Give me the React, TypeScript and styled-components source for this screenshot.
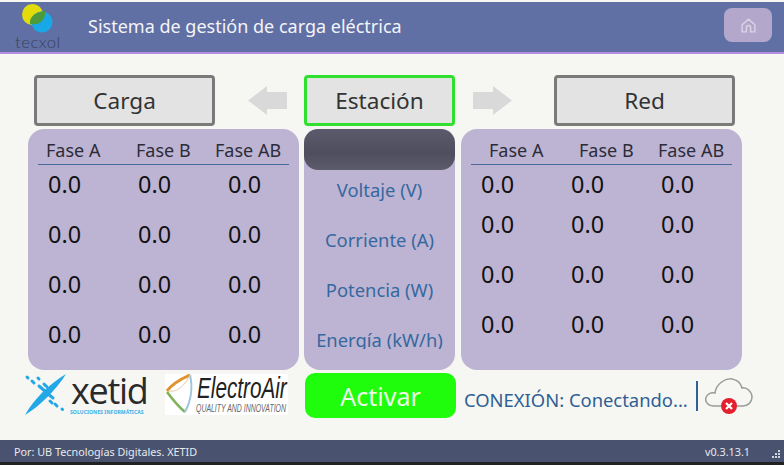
import React from "react";
import styled, { createGlobalStyle } from "styled-components";

const Global = createGlobalStyle`
  html, body { margin: 0; padding: 0; background: #fff; }
  #root { width: 784px; height: 465px; overflow: hidden; }
  * { box-sizing: border-box; }
`;
const FONT = `"Noto Sans", "Open Sans", "Liberation Sans", sans-serif`;

const Screen = styled.div`
  width: 784px; height: 465px; padding-top: 2px; display: flex; flex-direction: column;
  background: #f6f6f3; font-family: ${FONT}; overflow: hidden;
`;
const Header = styled.header`
  height: 52px; flex: none; display: flex; align-items: center; background: #6070a4;
  border-bottom: 2px solid #b48fe0; padding-right: 12px;
`;
const LogoBox = styled.div`
  width: 88px; height: 50px; flex: none; position: relative; padding-left: 15px; padding-top: 2px;
`;
const TecxolText = styled.span`
  position: absolute; left: 15px; top: 31px; font-size: 16.5px; line-height: 18px; letter-spacing: .6px;
  font-weight: 300; color: #36405f; font-family: "Lato", ${FONT};
`;
const Title = styled.h1`
  margin: 0 0 3px; flex: 1; font-size: 18px; line-height: 24px; font-weight: 400; color: #f4f4f8;
`;
const HomeButton = styled.button`
  width: 48px; height: 34px; margin-bottom: 4px; padding: 0; border: 0; border-radius: 8px; background: #b3a8cc;
  display: flex; align-items: center; justify-content: center;
`;
const Main = styled.main`
  flex: 1; display: grid; grid-template-columns: 271px 151px 282px; column-gap: 5px;
  grid-template-rows: 51px 241px 45px; row-gap: 3px;
  padding: 21px 0 0 28px; align-content: start;
`;
const TabCell = styled.div`
  display: flex; align-items: center;
  padding-left: ${p => p.$pl ?? 0}px; gap: ${p => p.$gap ?? 0}px;
`;
const Tab = styled.div`
  width: ${p => p.$w}px; height: 51px; flex: none; border-radius: 4px; background: #e3e3e3;
  border: 3px solid ${p => p.$active ? "#2fe02f" : "#7a7a7a"};
  display: flex; align-items: center; justify-content: center;
  font-size: 22.6px; color: #333;
`;
const Panel = styled.section`
  background: #bdb4d3; border-radius: 16px; height: 241px; margin-left: ${p => p.$ml ?? 0}px; padding-top: 9px;
`;
const HeadRow = styled.div`
  display: grid; grid-template-columns: 90px 79px 80px; height: 27px; align-items: center;
  padding: 0 0 3px ${p => p.$inset}px; margin-bottom: -1px;
  font-size: 18px; line-height: 22px; color: #2c2c38; border-bottom: 1px solid #4a6a9e;
  width: ${p => p.$w}px; margin-left: 10px; white-space: nowrap;
`;
const ValueRow = styled.div`
  display: grid; grid-template-columns: 90px 90px 90px; height: ${p => p.$h}px; align-items: center;
  font-size: 23.4px; color: #111; padding-left: 20px;
`;
const CenterPanel = styled(Panel)`
  padding: 0; display: flex; flex-direction: column; align-items: center;
`;
const Dark = styled.div`
  width: 151px; height: 41px; flex: none; border-radius: 14px;
  background: linear-gradient(#5a5a6c, #4e4e5e 60%, #5c5c6c);
`;
const MeasureList = styled.div`
  height: 179px; flex: none; overflow: hidden; display: flex; flex-direction: column; align-items: center;
`;
const Measure = styled.div`
  height: 50px; flex: none; font-size: 18.4px; line-height: 50px; color: #36689f; white-space: nowrap;
  &:first-child { margin-top: -5px; }
`;
const Logos = styled.div`
  display: flex; align-items: flex-start; gap: 17px; margin-left: -4px;
`;
const XetidLogo = styled.div`
  width: 124px; height: 44px; flex: none; position: relative; padding-top: 1px;
`;
const XetidWord = styled.span`
  position: absolute; left: 47px; top: 1px; font-size: 36px; line-height: 34px; color: #2a2a2a;
  font-family: "Open Sans", sans-serif; letter-spacing: -1.3px;
`;
const XetidSub = styled.span`
  position: absolute; left: 46px; top: 36px; font-size: 5px; line-height: 6px; font-weight: 700; color: #39aee8;
  white-space: nowrap; letter-spacing: .1px;
`;
const ElectroLogo = styled.div`
  width: 123px; height: 41px; flex: none; position: relative; background: #fff; margin-top: 1px;
`;
const ElectroWord = styled.span`
  position: absolute; left: 32px; top: 1px; font-size: 30px; line-height: 26px; color: #222; font-style: italic;
  font-family: "Liberation Sans", sans-serif; transform: scaleX(.69); transform-origin: left; white-space: nowrap;
`;
const ElectroSub = styled.span`
  position: absolute; left: 31px; top: 28px; font-size: 10.5px; line-height: 12px; color: #666; font-style: italic;
  font-family: "Liberation Sans", sans-serif; transform: scaleX(.66); transform-origin: left; white-space: nowrap;
`;
const Activate = styled.button`
  width: 151px; height: 45px; margin-left: 1px; border: 0; border-radius: 10px; background: #1ffd0c; color: #eef9e6;
  font-size: 25px; padding: 0; font-family: ${FONT};
`;
const Status = styled.div`
  display: flex; align-items: center; padding-left: 4px;
`;
const StatusText = styled.span`
  flex: none; font-size: 18.4px; line-height: 24px; color: #2f5f95; white-space: nowrap; width: 232px; margin-top: 9px;
`;
const Divider = styled.span`
  width: 2px; height: 30px; background: #2f6199; flex: none; margin-right: 7px;
`;
const Footer = styled.footer`
  height: 22px; flex: none; background: #49536f; color: #e8e8ee; font-size: 10.8px; display: flex;
  align-items: center; justify-content: space-between; padding: 0 34px 0 14px; position: relative;
`;
const Grip = styled.svg`
  position: absolute; right: 3px; bottom: 3px;
`;
const Strip = styled.div`
  height: 3px; flex: none; background: #222;
`;

const House = () => (
  <svg width="17" height="17" viewBox="0 0 24 24" fill="none" stroke="#d9d4e6" strokeWidth="2">
    <path d="M3 11 12 3l9 8v10h-6v-6a3 3 0 0 0-6 0v6H3z" />
  </svg>
);
const Arrow = ({ right }: { right?: boolean }) => (
  <svg width="39" height="29" viewBox="0 0 39 29">
    <path d={right ? "M0 6H20V0L39 14.5 20 29V23H0Z" : "M39 6H19V0L0 14.5 19 29V23H39Z"} fill="#d9d9d9" />
  </svg>
);
const Tecxol = () => (
  <LogoBox>
    <svg width="44" height="34" viewBox="0 0 44 34" style={{ display: "block" }}>
      <circle cx="17.5" cy="10.5" r="10.5" fill="#e2dc0a" />
      <circle cx="27" cy="18" r="10.5" fill="#18a8e8" />
      <path d="M15 20c-1-8 6-12 15-13 1 8-5 15-15 13z" fill="#4e9a3a" />
    </svg>
    <TecxolText>tecxol</TecxolText>
  </LogoBox>
);
const XMark = () => (
  <svg width="46" height="42" viewBox="0 0 46 42" style={{ display: "block" }}>
    <path d="M1 41C10 25 25 10 42 0 32 16 17 31 1 41Z" fill="#22a8e6" />
    <g stroke="#22a8e6" strokeWidth="3" strokeLinecap="round">
      <path d="M3 3l1 1M8 7l2 2M14 4l1 1M15 12l7 6M20 10l3 3M26 27l2 2M24 20l5 4M31 30l2 2M38 35l.5 .5" />
    </g>
  </svg>
);
const AirMark = () => (
  <svg width="30" height="41" viewBox="0 0 30 41" style={{ position: "absolute", left: 0, top: 0 }} fill="none">
    <path d="M2 17C8 9 16 5 25 1" stroke="#e0932d" strokeWidth="3" />
    <path d="M2 18C8 26 14 33 20 38" stroke="#7fb35a" strokeWidth="2.6" />
    <path d="M25 1c3 12 1 26-5 37" stroke="#9fc5dd" strokeWidth="2" />
    <path d="M3 17c7 1 14-1 22-16" stroke="#e9c9a0" strokeWidth="1" />
  </svg>
);
const CloudOff = () => (
  <svg width="48" height="37" viewBox="0 0 48 37" fill="none" style={{ flex: "none" }}>
    <path d="M16 29H9C3 29 0 25 .8 21 2 17 6 15 10 16 11 7 20 1 27 2 33 3 36 7 37 11 42 10 47 15 47 20 47 25 43 29 38 29H31" stroke="#9c9c9c" strokeWidth="1.5" />
    <circle cx="24" cy="29" r="8" fill="#e4202e" />
    <path d="M21 26l6 6m0-6-6 6" stroke="#fff" strokeWidth="2.2" />
  </svg>
);

const Values = ({ heights }: { heights: number[] }) => (
  <>
    {heights.map((h, i) => (
      <ValueRow key={i} $h={h}>
        <span>0.0</span><span>0.0</span><span>0.0</span>
      </ValueRow>
    ))}
  </>
);

export default function App() {
  return (
    <Screen>
      <Global />
      <Header>
        <Tecxol />
        <Title>Sistema de gestión de carga eléctrica</Title>
        <HomeButton aria-label="Inicio"><House /></HomeButton>
      </Header>
      <Main>
        <TabCell $pl={6} $gap={33}>
          <Tab $w={181}>Carga</Tab>
          <Arrow />
        </TabCell>
        <TabCell><Tab $w={151} $active>Estación</Tab></TabCell>
        <TabCell $pl={13} $gap={42}>
          <Arrow right />
          <Tab $w={181}>Red</Tab>
        </TabCell>

        <Panel>
          <HeadRow $inset={8} $w={251}><span>Fase A</span><span>Fase B</span><span>Fase AB</span></HeadRow>
          <Values heights={[40, 60, 40, 60]} />
        </Panel>
        <CenterPanel>
          <Dark />
          <MeasureList>
            <Measure>Voltaje (V)</Measure>
            <Measure>Corriente (A)</Measure>
            <Measure>Potencia (W)</Measure>
            <Measure>Energía (kW/h)</Measure>
          </MeasureList>
        </CenterPanel>
        <Panel $ml={1}>
          <HeadRow $inset={18} $w={261}><span>Fase A</span><span>Fase B</span><span>Fase AB</span></HeadRow>
          <Values heights={[40, 40, 60, 40]} />
        </Panel>

        <Logos>
          <XetidLogo>
            <XMark />
            <XetidWord>xetid</XetidWord>
            <XetidSub>SOLUCIONES INFORMÁTICAS</XetidSub>
          </XetidLogo>
          <ElectroLogo>
            <AirMark />
            <ElectroWord>ElectroAir</ElectroWord>
            <ElectroSub>QUALITY AND INNOVATION</ElectroSub>
          </ElectroLogo>
        </Logos>
        <Activate>Activar</Activate>
        <Status>
          <StatusText>CONEXIÓN: Conectando...</StatusText>
          <Divider />
          <CloudOff />
        </Status>
      </Main>
      <Footer>
        <span>Por: UB Tecnologías Digitales. XETID</span>
        <span>v0.3.13.1</span>
        <Grip width="10" height="10" viewBox="0 0 10 10" fill="#cfd3dd">
          <rect x="7" y="1" width="2" height="2" /><rect x="4" y="4" width="2" height="2" /><rect x="7" y="4" width="2" height="2" />
          <rect x="1" y="7" width="2" height="2" /><rect x="4" y="7" width="2" height="2" /><rect x="7" y="7" width="2" height="2" />
        </Grip>
      </Footer>
      <Strip />
    </Screen>
  );
}
